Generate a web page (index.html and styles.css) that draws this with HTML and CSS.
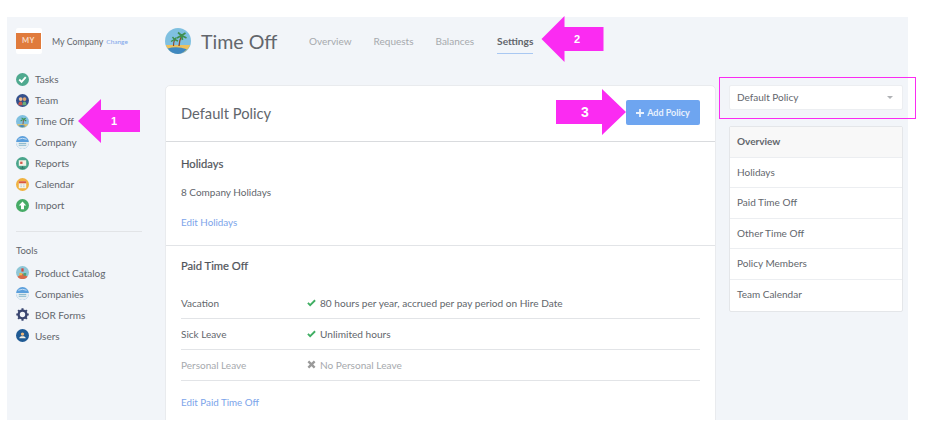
FILE: index.html
```html
<!DOCTYPE html>
<html lang="en">
<head>
  <meta charset="UTF-8" />
  <title>Time Off | Settings</title>
  <link rel="stylesheet" href="styles.css">
</head>
<body>

<div class="app">
  <aside class="sidebar">
    <div class="company">
      <div class="company-logo"><span>MY</span></div>
      <span class="company-name">My Company</span>
      <a class="company-change">Change</a>
    </div>

    <ul class="nav">
      <li>
        <svg class="nav-icon" viewBox="0 0 14 14"><circle cx="7" cy="7" r="7" fill="#4fa98f"/><path d="M3.5 7l2.5 2.5 4.5-5" fill="none" stroke="#fff" stroke-width="2"/></svg>
        Tasks
      </li>
      <li>
        <svg class="nav-icon" viewBox="0 0 14 14"><circle cx="7" cy="7" r="7" fill="#34508c"/><circle cx="5" cy="5.5" r="2" fill="#eebc8f"/><circle cx="9.2" cy="5.5" r="2" fill="#d9a06c"/><path d="M2.5 12c0-3 1-4 2.5-4s2 1 2 4z" fill="#c9574b"/><path d="M7 12c0-3 1-4 2.2-4s2 1 2 4z" fill="#6ab07c"/></svg>
        Team
      </li>
      <li>
        <svg class="nav-icon" viewBox="0 0 14 14"><circle cx="7" cy="7" r="7" fill="#7fc0e0"/><path d="M1 10h12a7 7 0 0 1-12 0z" fill="#ecc15d"/><path d="M2.5 11.5q4-1.5 8 .4a7 7 0 0 1-8-.4z" fill="#3f88c0"/><path d="M7.5 10l.6-5" stroke="#8a4a2a" stroke-width=".9"/><path d="M8 4.5L5 6.5M8 4.5l3 2M8 4.5L6 3M8 4.5l2.5-1" stroke="#3f8f4e" stroke-width="1.1"/></svg>
        Time Off
      </li>
      <li>
        <svg class="nav-icon" viewBox="0 0 14 14"><circle cx="7" cy="7" r="7" fill="#5b9fdc"/><path d="M0 6.5h14a7 7 0 0 1-14 1z" fill="#e6eef2"/><path d="M3 8h8M3 10h8" stroke="#7fb2c9"/><path d="M2.5 3.5q4.5-2 9 0" stroke="#cfe4f6" fill="none"/></svg>
        Company
      </li>
      <li>
        <svg class="nav-icon" viewBox="0 0 14 14"><circle cx="7" cy="7" r="7" fill="#4aa58b"/><rect x="3" y="3.5" width="8" height="6" fill="#f3f1e7"/><rect x="4.5" y="5" width="2.5" height="2.5" fill="#d3584a"/><path d="M7 10v2M4.5 12h5" stroke="#2d6f5e"/></svg>
        Reports
      </li>
      <li>
        <svg class="nav-icon" viewBox="0 0 14 14"><circle cx="7" cy="7" r="7" fill="#f0b240"/><rect x="3" y="3.5" width="8" height="7.5" fill="#f6f3e6"/><rect x="3" y="3.5" width="8" height="2.2" fill="#d9573f"/><path d="M5 7.5h1M8 7.5h1M5 9.3h1M8 9.3h1" stroke="#8fb8c9"/></svg>
        Calendar
      </li>
      <li>
        <svg class="nav-icon" viewBox="0 0 14 14"><circle cx="7" cy="7" r="7" fill="#46ab66"/><path d="M7 2.8L11 7H8.6v4H5.4V7H3z" fill="#fff"/></svg>
        Import
      </li>
    </ul>

    <div class="sidebar-rule"></div>
    <div class="sidebar-label">Tools</div>

    <ul class="nav">
      <li>
        <svg class="nav-icon" viewBox="0 0 14 14"><circle cx="7" cy="7" r="7" fill="#8ec6d6"/><path d="M1.5 11.5L7 8l5.5 3.5A7 7 0 0 1 1.5 11.5z" fill="#d9694a"/><rect x="5.8" y="2.5" width="2.4" height="3.5" fill="#d0483f"/><rect x="8" y="7.5" width="3" height="3" fill="#4fa37a"/><rect x="3.5" y="7.5" width="3" height="2.5" fill="#e6b94d"/></svg>
        Product Catalog
      </li>
      <li>
        <svg class="nav-icon" viewBox="0 0 14 14"><circle cx="7" cy="7" r="7" fill="#5b9fdc"/><path d="M0 6.5h14a7 7 0 0 1-14 1z" fill="#e6eef2"/><path d="M3 8h8M3 10h8" stroke="#7fb2c9"/><path d="M2.5 3.5q4.5-2 9 0" stroke="#cfe4f6" fill="none"/></svg>
        Companies
      </li>
      <li>
        <svg class="nav-icon" viewBox="0 0 14 14"><circle cx="7" cy="7" r="4.2" fill="none" stroke="#3a4670" stroke-width="2.6"/><path d="M7 .3v2.5M7 11.2v2.5M.3 7h2.5M11.2 7h2.5M2.3 2.3L4 4M10 10l1.7 1.7M2.3 11.7L4 10M10 4l1.7-1.7" stroke="#3a4670" stroke-width="2.2"/></svg>
        BOR Forms
      </li>
      <li>
        <svg class="nav-icon" viewBox="0 0 14 14"><circle cx="7" cy="7" r="7" fill="#1f5a94"/><circle cx="7" cy="5.5" r="1.8" fill="#f0b878"/><path d="M3.5 10c0-1.6 1.5-2.3 3.5-2.3s3.5.7 3.5 2.3z" fill="#f4f1e6"/></svg>
        Users
      </li>
    </ul>
  </aside>

  <main class="content">
    <div class="page-head">
      <svg class="page-icon" viewBox="0 0 26 26">
        <circle cx="13" cy="13" r="13" fill="#7fc0e0"/>
        <path d="M.8 17h24.4A13 13 0 0 1 .8 17z" fill="#ecc15d"/>
        <path d="M2.8 20.5q9-3 19 .8A13 13 0 0 1 13 26 13 13 0 0 1 2.8 20.5z" fill="#3f88c0"/>
        <path d="M14 18q.5-6 2.5-10" stroke="#8a4a2a" stroke-width="1.4" fill="none"/>
        <path d="M8.5 18q0-4 1-6" stroke="#8a4a2a" stroke-width="1.2" fill="none"/>
        <path d="M16.5 7.5L12 10M16.5 7.5l5 2.5M16.5 7.5L13 4.5M16.5 7.5l4-2.5M16.5 7.5l1 4.5" stroke="#3f8f4e" stroke-width="1.7"/>
        <path d="M9.5 11.5L6 13.5M9.5 11.5l3.5 1.5M9.5 11.5L7.5 9M9.5 11.5l2-2" stroke="#3f8f4e" stroke-width="1.4"/>
      </svg>
      <h1 class="page-title">Time Off</h1>
      <nav class="tabs">
        <a class="tab">Overview</a>
        <a class="tab">Requests</a>
        <a class="tab">Balances</a>
        <a class="tab tab-active">Settings</a>
      </nav>
    </div>

    <div class="columns">
      <section class="card">
        <div class="card-head">
          <h2 class="card-title">Default Policy</h2>
          <button class="btn">
            <svg class="btn-plus" viewBox="0 0 8 8"><path d="M4 0v8M0 4h8" stroke="#e8f1fd" stroke-width="1.8"/></svg>
            Add Policy
          </button>
        </div>

        <div class="card-section holidays">
          <h3 class="section-title">Holidays</h3>
          <p class="holiday-count">8 Company Holidays</p>
          <a class="link">Edit Holidays</a>
        </div>

        <div class="card-section pto">
          <h3 class="section-title">Paid Time Off</h3>
          <div class="rows">
            <div class="row">
              <span class="row-name">Vacation</span>
              <svg class="row-icon" viewBox="0 0 10 10"><path d="M1 5.5L3.5 8 9 2.5" fill="none" stroke="#3fae62" stroke-width="2"/></svg>
              80 hours per year, accrued per pay period on Hire Date
            </div>
            <div class="row">
              <span class="row-name">Sick Leave</span>
              <svg class="row-icon" viewBox="0 0 10 10"><path d="M1 5.5L3.5 8 9 2.5" fill="none" stroke="#3fae62" stroke-width="2"/></svg>
              Unlimited hours
            </div>
            <div class="row row-off">
              <span class="row-name">Personal Leave</span>
              <svg class="row-icon" viewBox="0 0 10 10"><path d="M1.5 1.5l7 7M8.5 1.5l-7 7" fill="none" stroke="#9a9a9a" stroke-width="2.6"/></svg>
              No Personal Leave
            </div>
          </div>
          <a class="link">Edit Paid Time Off</a>
        </div>
      </section>

      <aside class="side">
        <div class="policy-select">
          Default Policy
          <span class="caret"></span>
        </div>
        <ul class="side-menu">
          <li class="side-current">Overview</li>
          <li>Holidays</li>
          <li>Paid Time Off</li>
          <li>Other Time Off</li>
          <li>Policy Members</li>
          <li>Team Calendar</li>
        </ul>
      </aside>
    </div>
  </main>
</div>

<!-- annotations drawn over the screenshot -->
<div class="note note-1">
  <svg viewBox="0 0 62 44"><polygon points="0,22 23,0 23,11 62,11 62,33 23,33 23,44" fill="#fb2bf2"/></svg>
  <span>1</span>
</div>
<div class="note note-2">
  <svg viewBox="0 0 62 46"><polygon points="0,23 23,0 23,11 62,11 62,35 23,35 23,46" fill="#fb2bf2"/></svg>
  <span>2</span>
</div>
<div class="note note-3">
  <svg viewBox="0 0 70 46"><polygon points="70,23 46,0 46,11 0,11 0,35 46,35 46,46" fill="#fb2bf2"/></svg>
  <span>3</span>
</div>
<div class="note-box"></div>

</body>
</html>
```

FILE: styles.css
```css
:root {
  --page-bg: #f2f5f9;
  --text: #62666c;
  --muted: #a6a9ad;
  --link: #7ba4ea;
  --line: #e2e4e7;
  --pink: #fb2bf2;
}

* {
  box-sizing: border-box;
}

html, body {
  height: 100%;
}

body {
  margin: 0;
  background: #fff;
  font-family: 'Lato', sans-serif;
  font-size: 10px;
  color: var(--text);
  overflow: hidden;
}

ul {
  list-style: none;
  margin: 0;
  padding: 0;
}

.app {
  display: flex;
  width: 901px;
  height: 403px;
  margin: 17px 0 0 7px;
  background: var(--page-bg);
  overflow: hidden;
}

/* sidebar */
.sidebar {
  width: 158px;
  flex-shrink: 0;
  padding: 11px 23px 0 9px;
}

.company {
  display: flex;
  align-items: center;
  height: 26px;
}

.company-logo {
  width: 26px;
  height: 26px;
  padding: 5px 1px 5px 0;
  background: #fff;
  border-radius: 2px;
  margin-right: 10px;
}

.company-logo span {
  display: block;
  height: 16px;
  line-height: 16px;
  background: #e07b3c;
  color: #f8dcc6;
  font-size: 7.5px;
  font-weight: 700;
  text-align: center;
  letter-spacing: .5px;
}

.company-name {
  font-size: 8.8px;
  margin-right: 3px;
}

.company-change {
  font-size: 6.5px;
  color: var(--link);
}

.nav {
  margin-top: 14.5px;
}

.nav li {
  display: flex;
  align-items: center;
  height: 21px;
  font-size: 10px;
}

.nav-icon {
  width: 13px;
  height: 13px;
  margin-right: 6px;
  flex-shrink: 0;
}

.sidebar-rule {
  height: 1px;
  margin-top: 15.5px;
  background: var(--line);
}

.sidebar-label {
  margin-top: 13px;
  font-size: 9.5px;
  line-height: 12px;
}

.sidebar-label + .nav {
  margin-top: 5px;
}

/* main column */
.content {
  flex: 1;
  min-width: 0;
}

.page-head {
  display: flex;
  align-items: center;
  height: 26px;
  margin-top: 11px;
}

.page-icon {
  width: 26px;
  height: 26px;
  margin-right: 10px;
}

.page-title {
  margin: 0 31px 0 0;
  font-size: 19.6px;
  font-weight: 400;
  width: 77px;
  white-space: nowrap;
}

.tabs {
  display: flex;
  gap: 22px;
  height: 26px;
}

.tab {
  height: 26px;
  line-height: 26px;
  font-size: 10px;
  color: var(--muted);
}

.tab-active {
  margin-left: 1px;
  color: var(--text);
  font-size: 10.2px;
  font-weight: 700;
  border-bottom: 1px solid #a9c8f2;
}

.columns {
  display: flex;
  align-items: flex-start;
  gap: 13px;
  margin-top: 31px;
}

/* policy card */
.card {
  width: 551px;
  flex-shrink: 0;
  background: #fff;
  border: 1px solid #e9ebee;
  border-radius: 5px 5px 0 0;
}

.card-head {
  display: flex;
  align-items: center;
  justify-content: space-between;
  height: 56px;
  padding: 0 15px 2px 15px;
  border-bottom: 1px solid #d9dbde;
}

.card-title {
  margin: 0;
  font-size: 14.7px;
  font-weight: 400;
}

.btn {
  display: flex;
  align-items: center;
  justify-content: center;
  gap: 3px;
  width: 74px;
  height: 25px;
  padding: 0;
  border: none;
  border-radius: 2px;
  background: #6ea5f0;
  color: #e8f1fd;
  font-family: inherit;
  font-size: 9px;
  font-weight: 700;
}

.btn-plus {
  width: 8px;
  height: 8px;
}

.card-section {
  padding: 15px 15px 10px;
}

.holidays {
  height: 104px;
  border-bottom: 1px solid var(--line);
}

.pto {
  padding-top: 13px;
  padding-bottom: 30px;
}

.section-title {
  margin: 0;
  font-size: 11.2px;
  line-height: 14px;
  font-weight: 400;
  color: #50545a;
  -webkit-text-stroke: 0.2px #50545a;
}

.holiday-count {
  margin: 14px 0 16px;
  font-size: 10px;
  line-height: 14px;
}

.link {
  display: block;
  font-size: 9.8px;
  line-height: 14px;
  color: var(--link);
}

.rows {
  margin-top: 15px;
  margin-bottom: 14px;
}

.row {
  display: flex;
  align-items: center;
  height: 31px;
  padding-bottom: 1px;
  font-size: 10.1px;
  border-bottom: 1px solid var(--line);
}

.row-name {
  width: 126px;
  flex-shrink: 0;
  font-size: 10px;
}

.row-icon {
  width: 9px;
  height: 9px;
  margin-right: 4px;
}

.row-off {
  color: var(--muted);
}

/* right column */
.side {
  width: 174px;
  flex-shrink: 0;
}

.policy-select {
  display: flex;
  align-items: center;
  justify-content: space-between;
  height: 25px;
  padding: 0 9px 1px 7px;
  background: #fff;
  border: 1px solid #eceef1;
  border-radius: 2px;
  font-size: 10px;
}

.caret {
  width: 0;
  height: 0;
  border: 3px solid transparent;
  border-top: 3px solid #b0b2b5;
  border-bottom: 0;
}

.side-menu {
  margin-top: 16px;
  background: #fff;
  border: 1px solid #e4e6e9;
  border-radius: 2px;
}

.side-menu li {
  height: 30.6px;
  line-height: 29px;
  padding-left: 7px;
  font-size: 10px;
  border-bottom: 1px solid #eceef1;
}

.side-menu li:last-child {
  border-bottom: none;
}

.side-menu .side-current {
  background: #f8f8f8;
  font-weight: 700;
}

/* annotations */
.note {
  position: absolute;
  color: #fff;
  font-family: 'Liberation Sans', sans-serif;
  font-weight: 700;
}

.note svg {
  display: block;
  width: 100%;
  height: 100%;
}

.note span {
  position: absolute;
  top: 50%;
  transform: translateY(-50%);
}

.note-1 {
  left: 78px;
  top: 99px;
  width: 62px;
  height: 44px;
  font-size: 11px;
}

.note-1 span {
  left: 33px;
}

.note-2 {
  left: 541px;
  top: 16px;
  width: 63px;
  height: 46px;
  font-size: 11px;
}

.note-2 span {
  left: 33px;
}

.note-3 {
  left: 556px;
  top: 89px;
  width: 70px;
  height: 46px;
  font-size: 14px;
}

.note-3 span {
  left: 25px;
}

.note-box {
  position: absolute;
  left: 719px;
  top: 77px;
  width: 197px;
  height: 42px;
  border: 1px solid var(--pink);
}
```
